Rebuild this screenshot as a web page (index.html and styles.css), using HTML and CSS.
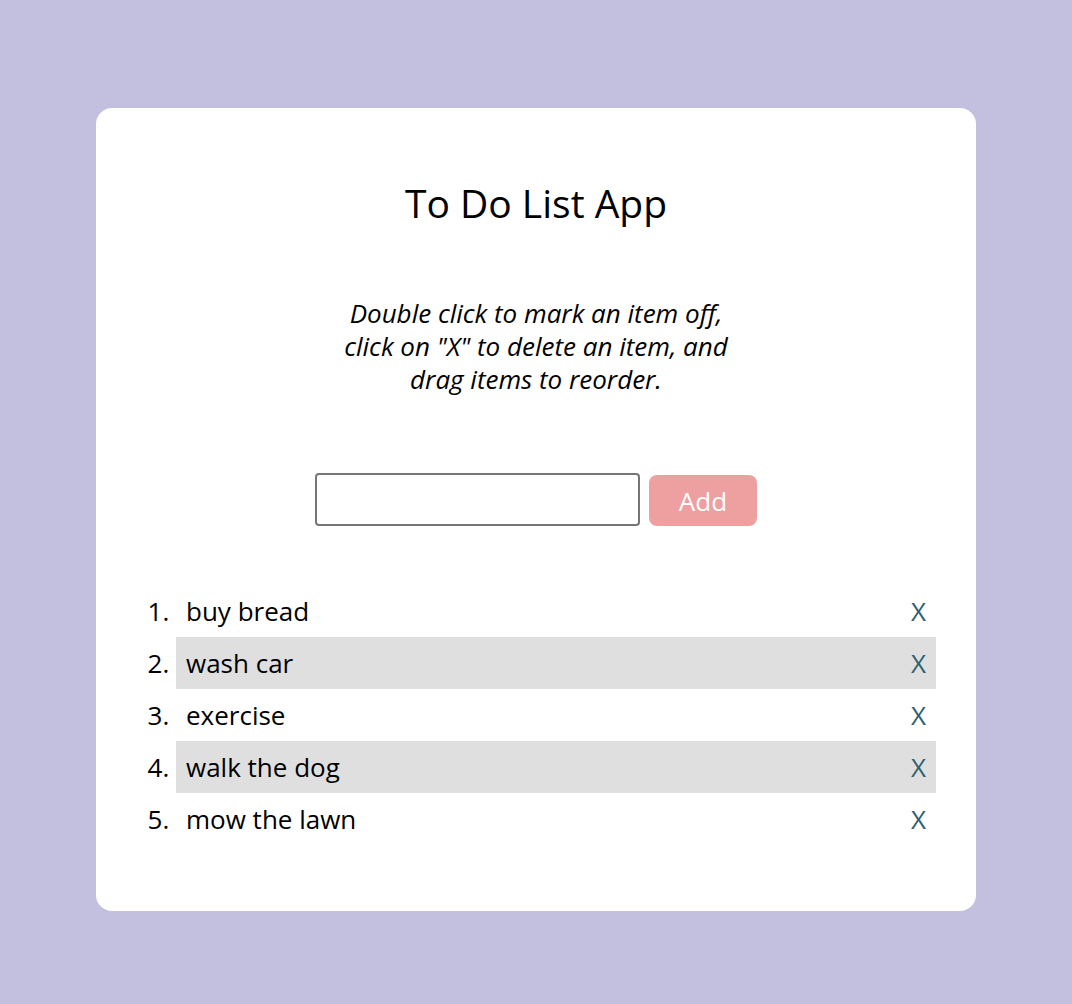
FILE: index.html
```html
<!DOCTYPE html>
<html lang="en">
<head>
<meta charset="utf-8">
<title>To Do List App</title>
<link rel="stylesheet" href="styles.css">
</head>
<body>
<main class="card">
  <h1 class="title">To Do List App</h1>
  <p class="hint">Double click to mark an item off, click on "X" to delete an item, and drag items to reorder.</p>
  <form class="add-form">
    <input class="add-input" type="text" aria-label="New item">
    <button class="add-btn" type="button">Add</button>
  </form>
  <ol class="list">
    <li class="item"><div class="item-row"><span class="item-text">buy bread</span><span class="del">X</span></div></li>
    <li class="item alt"><div class="item-row"><span class="item-text">wash car</span><span class="del">X</span></div></li>
    <li class="item"><div class="item-row"><span class="item-text">exercise</span><span class="del">X</span></div></li>
    <li class="item alt"><div class="item-row"><span class="item-text">walk the dog</span><span class="del">X</span></div></li>
    <li class="item"><div class="item-row"><span class="item-text">mow the lawn</span><span class="del">X</span></div></li>
  </ol>
</main>
</body>
</html>
```
FILE: styles.css
```css
html, body {
  margin: 0;
  padding: 0;
}
body {
  background: #c3c0df;
  font-family: "Open Sans", sans-serif;
  color: #000;
  padding: 108px 96px 93px;
}
.card {
  background: #fff;
  border-radius: 16px;
  padding: 63px 40px 66px;
  display: flex;
  flex-direction: column;
  align-items: center;
}
.title {
  margin: 0;
  font-size: 39px;
  font-weight: 400;
  line-height: 64px;
}
.hint {
  margin: 62px 0 0;
  width: 400px;
  text-align: center;
  font-style: italic;
  font-size: 26px;
  line-height: 33px;
}
.add-form {
  margin: 77px 0 0;
  display: flex;
  align-items: center;
  gap: 9px;
}
.add-input {
  box-sizing: border-box;
  width: 325px;
  height: 53px;
  border: 2px solid #767676;
  border-radius: 4px;
  font: inherit;
  font-size: 22px;
  padding: 0 8px;
  margin: 0;
}
.add-btn {
  box-sizing: border-box;
  width: 108px;
  height: 51px;
  border: none;
  border-radius: 8px;
  background: #ee9f9f;
  color: #fff;
  font-family: "Open Sans", sans-serif;
  font-size: 26px;
  margin: 2px 0 0;
}
.list {
  align-self: stretch;
  margin: 59px 0 0;
  padding: 0 0 0 40px;
  font-size: 26px;
}
.item {
  height: 52px;
  line-height: 52px;
}
.item.alt {
  background: #dfdfdf;
}
.item-row {
  display: flex;
  justify-content: space-between;
  align-items: center;
  height: 52px;
  padding: 0 10px;
}
.del {
  color: #2e6070;
}
```
